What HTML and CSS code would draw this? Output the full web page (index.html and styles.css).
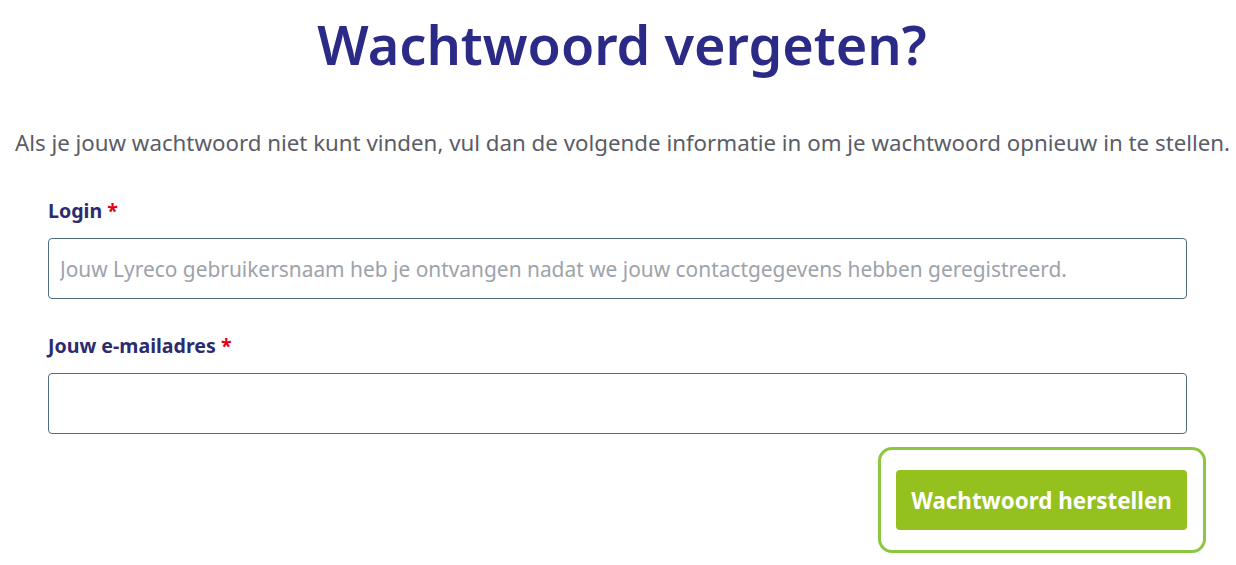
FILE: index.html
```
<!DOCTYPE html>
<html lang="nl">
<head>
<meta charset="utf-8">
<link rel="stylesheet" href="styles.css">
</head>
<body>
<main class="page">
  <h1 class="title">Wachtwoord vergeten?</h1>
  <p class="intro">Als je jouw wachtwoord niet kunt vinden, vul dan de volgende informatie in om je wachtwoord opnieuw in te stellen.</p>
  <form class="form">
    <div class="field">
      <label class="label">Login <span class="req">*</span></label>
      <input class="input" type="text" placeholder="Jouw Lyreco gebruikersnaam heb je ontvangen nadat we jouw contactgegevens hebben geregistreerd.">
    </div>
    <div class="field">
      <label class="label">Jouw e-mailadres <span class="req">*</span></label>
      <input class="input" type="text">
    </div>
    <div class="actions">
      <div class="focus-ring">
        <button class="btn" type="button">Wachtwoord herstellen</button>
      </div>
    </div>
  </form>
</main>
</body>
</html>
```
FILE: styles.css
```
html, body {
  margin: 0;
  padding: 0;
  background: #fff;
}
body {
  font-family: "Noto Sans", "Open Sans", sans-serif;
}
.page {
  width: 1236px;
  padding-top: 8px;
}
.title {
  margin: 0;
  padding-left: 8px;
  text-align: center;
  font-size: 54px;
  font-weight: 600;
  line-height: 72px;
  color: #2b2a86;
}
.intro {
  margin: 49px 0 0 0;
  padding-left: 9px;
  text-align: center;
  font-size: 22.3px;
  line-height: 28px;
  color: #5a5d66;
  white-space: nowrap;
}
.form {
  margin: 41px 49px 0 48px;
  display: flex;
  flex-direction: column;
}
.field {
  display: flex;
  flex-direction: column;
  margin-bottom: 34px;
}
.label {
  font-size: 19.6px;
  font-weight: 700;
  line-height: 26px;
  color: #2d2a6e;
  margin-bottom: 14px;
}
.req {
  color: #e3001b;
}
.input {
  box-sizing: border-box;
  height: 61px;
  border: 1px solid #4f6d80;
  border-radius: 4px;
  padding: 0 11px;
  font-family: "Noto Sans", "Open Sans", sans-serif;
  font-size: 20.9px;
  color: #333;
  background: #fff;
}
.input::placeholder {
  color: #9ea3aa;
}
.actions {
  display: flex;
  justify-content: flex-end;
  margin-top: -21px;
  margin-right: -19px;
}
.focus-ring {
  border: 3px solid #8dc63f;
  border-radius: 14px;
  padding: 20px 16px 20px 15px;
}
.btn {
  display: block;
  width: 291px;
  height: 60px;
  border: none;
  border-radius: 4px;
  background: #95c11f;
  color: #fff;
  font-family: "Noto Sans", "Open Sans", sans-serif;
  font-size: 22.4px;
  font-weight: 700;
}
```
